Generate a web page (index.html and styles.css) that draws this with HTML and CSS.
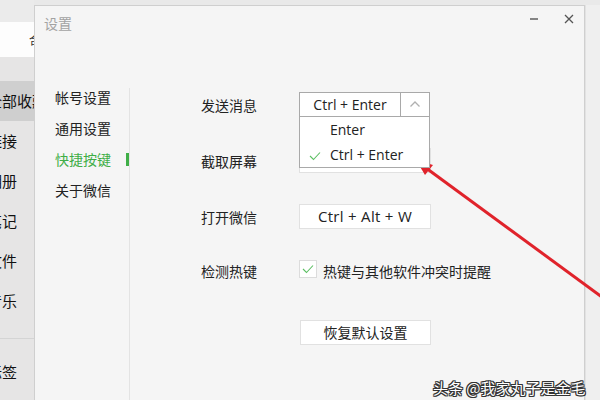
FILE: index.html
```
<!DOCTYPE html>
<html lang="zh-CN">
<head>
<meta charset="utf-8">
<title>设置</title>
<link rel="stylesheet" href="styles.css">
</head>
<body>
<div class="screen">
  <aside class="app">
    <div class="app-top"></div>
    <div class="app-search"><span class="search-mark">合</span></div>
    <div class="app-gap"></div>
    <ul class="app-list">
      <li class="app-item selected"><span>全部收藏</span></li>
      <li class="app-item"><span>链接</span></li>
      <li class="app-item"><span>相册</span></li>
      <li class="app-item"><span>笔记</span></li>
      <li class="app-item"><span>文件</span></li>
      <li class="app-item"><span>音乐</span></li>
    </ul>
    <div class="app-divider"></div>
    <ul class="app-list">
      <li class="app-item"><span>标签</span></li>
    </ul>
  </aside>

  <section class="dialog">
    <header class="titlebar">
      <span class="title">设置</span>
      <div class="win-btns">
        <svg class="win-btn" viewBox="0 0 16 16" width="16" height="16"><path d="M4 8H12" stroke="#555" stroke-width="1.4"/></svg>
        <svg class="win-btn" viewBox="0 0 16 16" width="16" height="16"><path d="M4 4L12 12M12 4L4 12" stroke="#555" stroke-width="1.3"/></svg>
      </div>
    </header>
    <div class="dialog-body">
      <nav class="nav">
        <div class="nav-item">帐号设置</div>
        <div class="nav-item">通用设置</div>
        <div class="nav-item active">快捷按键</div>
        <div class="nav-item">关于微信</div>
      </nav>
      <div class="content">
        <div class="row">
          <span class="label">发送消息</span>
          <div class="select">
            <span class="select-value latin">Ctrl + Enter</span>
            <span class="select-arrow">
              <svg viewBox="0 0 12 8" width="12" height="8"><path d="M1.5 6.5L6 2L10.5 6.5" fill="none" stroke="#b0b0b0" stroke-width="1.3"/></svg>
            </span>
            <ul class="dropdown">
              <li class="option latin">Enter</li>
              <li class="option latin checked">
                <svg class="check" viewBox="0 0 12 10" width="12" height="10"><path d="M1 5L4.5 8.5L11 1.5" fill="none" stroke="#5cbf63" stroke-width="1.1"/></svg>
                Ctrl + Enter
              </li>
            </ul>
          </div>
        </div>
        <div class="row">
          <span class="label">截取屏幕</span>
          <div class="field"></div>
        </div>
        <div class="row">
          <span class="label">打开微信</span>
          <div class="field latin spaced">Ctrl + Alt + W</div>
        </div>
        <div class="row row-check">
          <span class="label">检测热键</span>
          <span class="checkbox">
            <svg viewBox="0 0 12 10" width="12" height="10"><path d="M1 5L4.5 8.5L11 1.5" fill="none" stroke="#5cbf63" stroke-width="1.1"/></svg>
          </span>
          <span class="check-text">热键与其他软件冲突时提醒</span>
        </div>
        <button class="reset">恢复默认设置</button>
      </div>
    </div>
  </section>

  <div class="right-strip"></div>

  <svg class="arrow" viewBox="0 0 600 400" width="600" height="400">
    <line x1="426" y1="168" x2="606" y2="300" stroke="#e0232b" stroke-width="3"/>
    <polygon points="416,160 433,165 425,175" fill="#e0232b"/>
  </svg>

  <div class="watermark">头条 @我家丸子是金毛</div>
</div>
</body>
</html>
```

FILE: styles.css
```
* {
  box-sizing: border-box;
}

html, body {
  margin: 0;
  padding: 0;
}

body {
  width: 600px;
  height: 400px;
  overflow: hidden;
  font-family: "Noto Sans CJK SC", "Noto Sans", sans-serif;
  color: #222;
}

.screen {
  position: relative;
  width: 600px;
  height: 400px;
  display: flex;
  background: #e9e9e9;
  overflow: hidden;
}

/* background app (partly hidden) */
.app {
  width: 34px;
  flex: none;
  background: #e6e5e5;
  overflow: hidden;
}

.app-top {
  height: 22px;
  background: #ebebeb;
}

.app-search {
  height: 35px;
  background: #fdfdfd;
  font-size: 12px;
  line-height: 35px;
  color: #333;
  padding-left: 29px;
  white-space: nowrap;
}

.app-gap {
  height: 24px;
}

.app-list {
  list-style: none;
  margin: 0;
  padding: 0;
}

.app-item {
  height: 40px;
  line-height: 40px;
  font-size: 15px;
  color: #111;
  white-space: nowrap;
}

.app-item span {
  display: inline-block;
  margin-left: -13px;
}

.app-item.selected {
  background: #cfcfcf;
}

.app-divider {
  height: 18px;
  border-bottom: 1px solid #d4d4d4;
  margin-bottom: 13px;
}

/* dialog */
.dialog {
  width: 551px;
  flex: none;
  margin-top: 5px;
  height: 420px;
  background: #f5f5f5;
  border: 1px solid #cfcfcf;
  border-bottom: none;
}

.titlebar {
  height: 35px;
  display: flex;
  justify-content: space-between;
  align-items: flex-start;
}

.title {
  padding: 7px 0 0 9px;
  font-size: 14px;
  line-height: 20px;
  color: #a3a3a3;
}

.win-btns {
  display: flex;
  gap: 19px;
  padding-top: 5px;
  margin-right: 7px;
}

.win-btn {
  display: block;
}

.dialog-body {
  display: flex;
  height: 380px;
}

.nav {
  width: 94px;
  flex: none;
  padding-top: 41px;
}

.nav-item {
  position: relative;
  height: 31px;
  line-height: 31px;
  padding-left: 20px;
  font-size: 14px;
  color: #222;
}

.nav-item.active {
  color: #3fae47;
}

.nav-item.active::after {
  content: "";
  position: absolute;
  right: 0;
  top: 9px;
  width: 3px;
  height: 13px;
  background: #3fae47;
}

.content {
  flex: 1;
  margin-top: 47px;
  padding: 4px 0 0 71px;
  border-left: 1px solid #e3e3e3;
}

.row {
  display: flex;
  align-items: center;
  height: 25px;
  margin-bottom: 31px;
}

.label {
  width: 98px;
  flex: none;
  font-size: 14px;
  color: #222;
}

.latin {
  font-family: "Open Sans", "Noto Sans CJK SC", sans-serif;
}

.select {
  position: relative;
  z-index: 2;
  display: flex;
  width: 131px;
  height: 25px;
  background: #fff;
  border: 1px solid #a9a9a9;
}

.select-value {
  width: 101px;
  border-right: 1px solid #a9a9a9;
  text-align: center;
  font-size: 14px;
  line-height: 23px;
  color: #222;
}

.select-arrow {
  flex: 1;
  display: flex;
  align-items: center;
  justify-content: center;
  padding-bottom: 2px;
}

.dropdown {
  position: absolute;
  left: -1px;
  top: 23px;
  width: 131px;
  height: 52px;
  margin: 0;
  padding: 1px 0 0;
  list-style: none;
  background: #fff;
  border: 1px solid #a9a9a9;
}

.option {
  position: relative;
  height: 24px;
  line-height: 24px;
  padding-left: 30px;
  font-size: 14px;
  color: #222;
}

.option.checked {
  line-height: 26px;
}

.check {
  position: absolute;
  left: 9px;
  top: 9px;
}

.field {
  width: 132px;
  height: 25px;
  background: #fff;
  border: 1px solid #e1e1e1;
  text-align: center;
  font-size: 14px;
  line-height: 23px;
  color: #222;
}

.field.spaced {
  font-size: 15px;
  letter-spacing: 0.3px;
}

.row-check {
  align-items: flex-start;
  height: 20px;
  margin-bottom: 40px;
}

.row-check .label {
  line-height: 20px;
  padding-top: 1px;
}

.checkbox {
  width: 18px;
  height: 18px;
  flex: none;
  background: #fff;
  border: 1px solid #dcdcdc;
  display: flex;
  align-items: center;
  justify-content: center;
}

.check-text {
  margin-left: 6px;
  font-size: 14px;
  line-height: 20px;
  padding-top: 1px;
  color: #222;
}

.reset {
  display: block;
  margin-left: 99px;
  width: 131px;
  height: 25px;
  background: #fff;
  border: 1px solid #e1e1e1;
  font-family: "Noto Sans CJK SC", sans-serif;
  font-size: 14px;
  line-height: 23px;
  color: #222;
  padding: 0;
}

.right-strip {
  flex: 1;
  margin-top: 5px;
  background: #efefef;
  border-left: 1px solid #e2e2e2;
}

.arrow {
  position: absolute;
  left: 0;
  top: 0;
  pointer-events: none;
}

.watermark {
  position: absolute;
  left: 433px;
  top: 377px;
  font-size: 15px;
  line-height: 22px;
  color: #fff;
  white-space: nowrap;
  text-shadow:
    1px 0 0 #333, -1px 0 0 #333, 0 1px 0 #333, 0 -1px 0 #333,
    1px 1px 0 #333, -1px -1px 0 #333, 1px -1px 0 #333, -1px 1px 0 #333;
}
```
